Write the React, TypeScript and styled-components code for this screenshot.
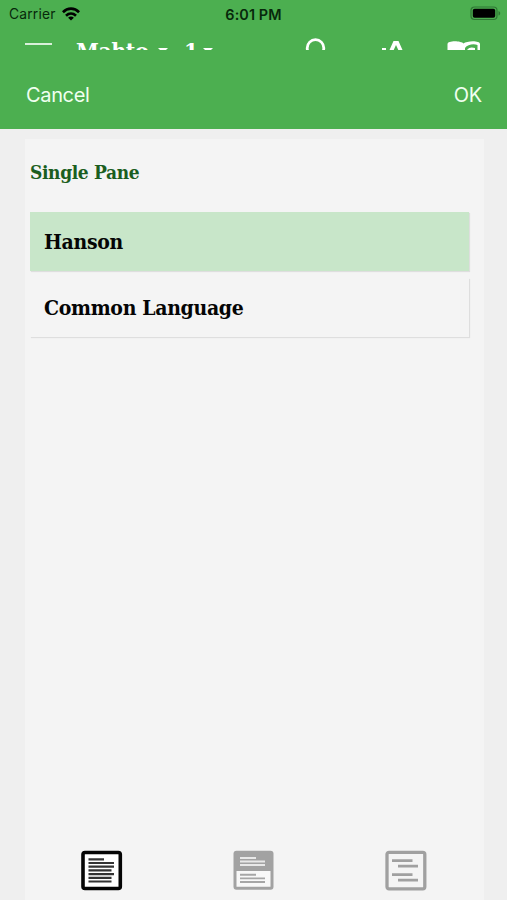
import React from 'react';
import styled, { createGlobalStyle } from 'styled-components';

const GlobalStyle = createGlobalStyle`
  * { box-sizing: border-box; }
  body { margin: 0; background: #efefef; font-family: Inter, "Liberation Sans", sans-serif; }
  svg { display: block; }
`;

const Screen = styled.div`
  width: 507px;
  height: 900px;
  display: flex;
  flex-direction: column;
  background: #efefef;
  overflow: hidden;
`;

const StatusBar = styled.header`
  height: 28px;
  flex: none;
  display: grid;
  grid-template-columns: 1fr auto 1fr;
  align-items: center;
  padding: 0 6px 0 9px;
  background: #4caf50;
  color: #07280b;
  font-size: 13.8px;
`;

const Carrier = styled.div`
  display: flex;
  align-items: center;
  gap: 6px;
  letter-spacing: 0.2px;
`;

const Clock = styled.div`
  margin: 0 3px 0 0;
  font-weight: 600;
  font-size: 14.4px;
  letter-spacing: 0.1px;
`;

const Battery = styled.div`
  justify-self: end;
  margin-top: -2px;
`;

const ReaderBar = styled.div`
  height: 22px;
  flex: none;
  display: flex;
  align-items: flex-start;
  overflow: hidden;
  background: #4caf50;
  color: #fff;
`;

const MenuLine = styled.div`
  flex: none;
  width: 27px;
  height: 2px;
  margin: 15px 24px 0 25px;
  background: #d9f0da;
`;

const BookTitle = styled.div<{ $width: number }>`
  flex: none;
  width: ${(p) => p.$width}px;
  margin-top: 9px;
  font: 700 23px/28px "Roboto Slab", "DejaVu Serif Condensed", "DejaVu Serif", serif;
  font-stretch: condensed;
  letter-spacing: -0.5px;
  white-space: nowrap;
`;

const Caret = styled.div<{ $gap: number }>`
  flex: none;
  margin: 20px ${(p) => p.$gap}px 0 0;
  border: 5px solid transparent;
  border-top-color: #fff;
`;

const DialogBar = styled.div`
  height: 79px;
  flex: none;
  display: flex;
  align-items: center;
  justify-content: space-between;
  padding: 11px 25px 0 26px;
  background: #4caf50;
`;

const BarButton = styled.button<{ $spacing: number }>`
  padding: 0;
  border: 0;
  background: none;
  color: #f0fff0;
  font: 400 20px/26px Inter, "Liberation Sans", sans-serif;
  letter-spacing: ${(p) => p.$spacing}px;
`;

const Sheet = styled.main`
  flex: 1;
  display: flex;
  flex-direction: column;
  margin: 10px 23px 0 25px;
  padding: 19px 15px 0 5px;
  background: #f4f4f4;
`;

const Heading = styled.h2`
  margin: 0 0 26px;
  color: #1b5e20;
  font: 700 19px/28px "Roboto Slab", "DejaVu Serif Condensed", "DejaVu Serif", serif;
  font-stretch: condensed;
  letter-spacing: -0.37px;
`;

const Options = styled.div`
  display: flex;
  flex-direction: column;
  gap: 7px;
`;

const Option = styled.div<{ $selected?: boolean }>`
  height: 59px;
  display: flex;
  align-items: center;
  padding: 0 14px;
  background: ${(p) => (p.$selected ? '#c8e6c9' : '#f4f4f4')};
  box-shadow: 1px 1px 1px rgba(0, 0, 0, 0.09);
  color: #050505;
  font: 700 21px/30px "Roboto Slab", "DejaVu Serif Condensed", "DejaVu Serif", serif;
  font-stretch: condensed;
  letter-spacing: -0.32px;
`;

const Tabs = styled.nav`
  display: grid;
  grid-template-columns: repeat(3, 152.3px);
  justify-items: center;
  margin: auto -15px 9px -5px;
`;

const WifiIcon = () => (
  <svg width="18" height="14" viewBox="0 0 18 14" fill="none" stroke="#000" strokeWidth="2.7">
    <path d="M.9 5.2C5.5.5 12.5.5 17.1 5.2M4 8.7c3-2.8 7-2.8 10 0" />
    <path d="M9 13.6 6.1 10.7c1.7-1.5 4.1-1.5 5.8 0Z" fill="#000" stroke="none" />
  </svg>
);

const BatteryIcon = () => (
  <svg width="31" height="15" viewBox="0 0 31 15">
    <rect x="1" y="1" width="26" height="12.5" rx="3.5" fill="none" stroke="#2f7834" strokeWidth="1.2" />
    <rect x="2.8" y="2.8" width="22.4" height="8.9" rx="1.8" />
    <path d="M28.5 5v4.6c2.3-.8 2.3-3.8 0-4.6Z" fill="#2f7834" />
  </svg>
);

const ReaderTools = styled.svg`
  flex: none;
  margin-left: 86px;
`;

const SinglePaneIcon = () => (
  <svg width="43" height="41" viewBox="0 0 43 41">
    <rect x="3" y="2.5" width="37.3" height="36" rx="2" fill="#fff" stroke="#050505" strokeWidth="3.6" />
    <path
      d="M8.5 9.3H24M8.5 13H34M8.5 16.7H34M8.5 20.4H31.5M8.5 24.1H34M8.5 27.8H31.5M8.5 31.5H31.5"
      stroke="#333"
      strokeWidth="2.2"
    />
  </svg>
);

const TwoPaneIcon = () => (
  <svg width="43" height="41" viewBox="0 0 43 41">
    <rect x="1.5" y=".8" width="40" height="39" rx="3" fill="#a2a2a2" />
    <path d="M4.5 21h34v15.7h-34Z" fill="#f8f8f8" />
    <path d="M8 8h16M8 11.5h25M8 15h25" stroke="#e8e8e8" strokeWidth="1.9" />
    <path d="M8 24.8h16M8 28.4h25M8 32h25" stroke="#a6a6a6" strokeWidth="1.9" />
  </svg>
);

const InterlinearIcon = () => (
  <svg width="43" height="41" viewBox="0 0 43 41" fill="none" stroke="#a0a0a0">
    <rect x="3" y="2.3" width="37.8" height="36.5" rx="2" strokeWidth="3.3" />
    <path d="M8 10.7h20.5M14 16.1h20M8 24.7h20.5M14 30.2h20" strokeWidth="2.8" />
  </svg>
);

export default function App() {
  return (
    <>
      <GlobalStyle />
      <Screen>
        <StatusBar>
          <Carrier>Carrier <WifiIcon /></Carrier>
          <Clock>6:01 PM</Clock>
          <Battery><BatteryIcon /></Battery>
        </StatusBar>
        <ReaderBar>
          <MenuLine />
          <BookTitle $width={82}>Mahto</BookTitle>
          <Caret $gap={16} />
          <BookTitle $width={19}>1</BookTitle>
          <Caret $gap={0} />
          <ReaderTools width="190" height="22" viewBox="0 0 190 22">
            <circle cx="16.5" cy="20" r="8.3" fill="none" stroke="#fff" strokeWidth="2.8" />
            <path d="M83 20h4v2h-4ZM90.5 22l4-9h5l4 9h-4.2l-2.3-5-2.3 5Z" fill="#fff" />
            <path d="M148.5 22v-6c0-4 14-3.5 16-.5 3-3 16.5-3.5 16.5.5v6h-2.5v-5c-4-1.5-10-.5-12.5 3v2Z" fill="#fff" />
            <path d="M168 22c2-3 5-3 8-2v2Z" fill="#fff" />
          </ReaderTools>
        </ReaderBar>
        <DialogBar>
          <BarButton $spacing={-0.35}>Cancel</BarButton>
          <BarButton $spacing={-0.3}>OK</BarButton>
        </DialogBar>
        <Sheet>
          <Heading>Single Pane</Heading>
          <Options>
            <Option $selected>Hanson</Option>
            <Option>Common Language</Option>
          </Options>
          <Tabs>
            <SinglePaneIcon />
            <TwoPaneIcon />
            <InterlinearIcon />
          </Tabs>
        </Sheet>
      </Screen>
    </>
  );
}
